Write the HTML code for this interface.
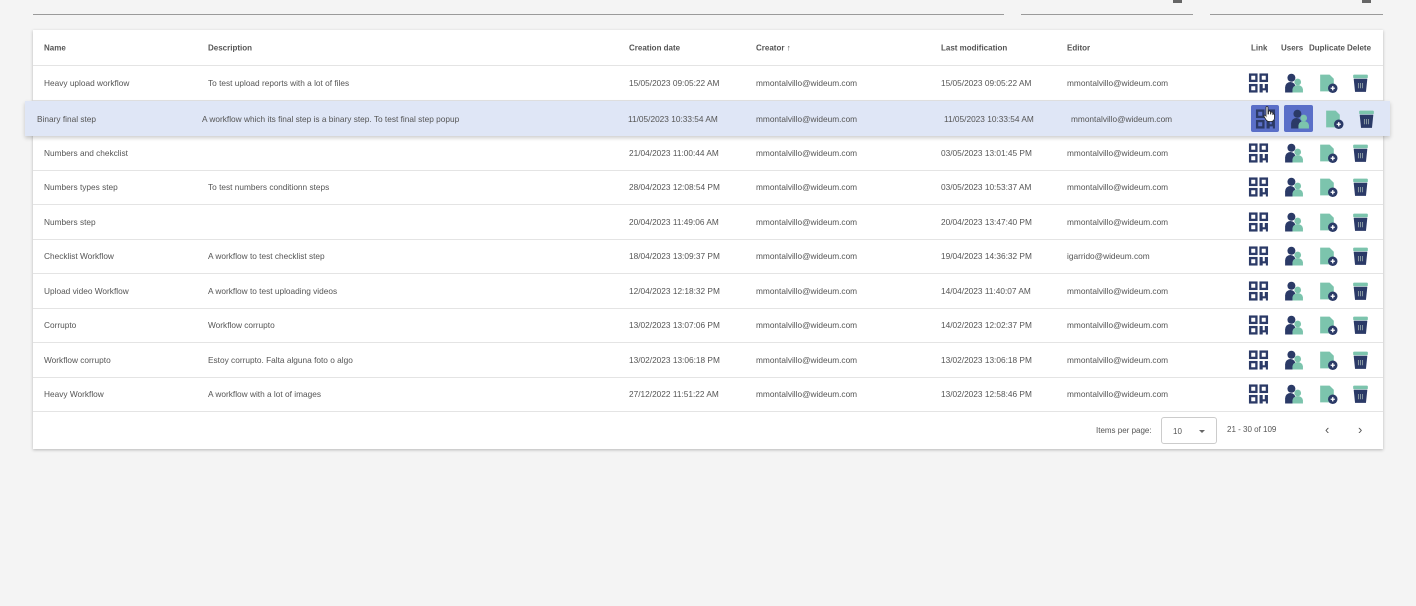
<!DOCTYPE html>
<html><head><meta charset="utf-8"><style>
*{margin:0;padding:0;box-sizing:border-box}
body{width:1416px;height:606px;background:#f4f4f4;font-family:"Liberation Sans",Arial,sans-serif;position:relative;overflow:hidden;color:#555}
.ln{position:absolute;top:14px;height:1px;background:#9a9a9a}
.mk{position:absolute;top:0;width:9px;height:3px;background:#666}
.card{position:absolute;left:33px;top:30px;width:1350px;height:419px;background:#fff;box-shadow:0 1px 3px rgba(0,0,0,.25)}
.r{position:absolute;left:0;width:1350px;height:35px;border-bottom:1px solid #e4e4e4;font-size:8.3px}
.r span{position:absolute;top:50%;transform:translateY(-50%);white-space:nowrap}
.h{font-weight:bold;color:#555;font-size:8px}
.hl{position:absolute;left:25px;top:101px;width:1365px;height:35px;background:#dfe6f6;box-shadow:0 2px 4px rgba(0,0,0,.2);font-size:8.3px;z-index:2}
.hl span{position:absolute;top:50%;transform:translateY(-50%);white-space:nowrap}
svg.i{position:absolute;top:50%;transform:translateY(-50%);width:21px;height:21px}
</style></head><body>
<svg width="0" height="0" style="position:absolute"><defs>
<symbol id="lk" viewBox="0 0 20 20"><g fill="none" stroke="#2b3a67" stroke-width="2.2"><rect x="2" y="2" width="6" height="6"/><rect x="12" y="2" width="6" height="6"/><rect x="2" y="12" width="6" height="6"/></g><path d="M11 11h3v4h2v-4h3v8h-2v-2h-3v2h-3z" fill="#2b3a67"/></symbol>
<symbol id="us" viewBox="0 0 20 20"><circle cx="8" cy="5" r="3.8" fill="#2b3a67"/><path d="M2 19v-5a5 5 0 0 1 10 0v5z" fill="#2b3a67"/><circle cx="14" cy="9" r="3.2" fill="#7cc4ad"/><path d="M9 19v-3a5 4 0 0 1 10 0v3z" fill="#7cc4ad"/></symbol>
<symbol id="du" viewBox="0 0 20 20"><path d="M3 2h9l4 4v12H3z" fill="#7cc4ad"/><circle cx="15" cy="15" r="4.5" fill="#2b3a67"/><path d="M13 15h4M15 13v4" stroke="#fff" stroke-width="1.3"/></symbol>
<symbol id="de" viewBox="0 0 20 20"><rect x="3" y="2" width="14" height="3.5" rx="1" fill="#7cc4ad"/><path d="M3.5 6h13l-1.3 12.5H4.8z" fill="#2b3a67"/><path d="M8 10v5M10 10v5M12 10v5" stroke="#9aa" stroke-width="0.8"/></symbol>
</defs></svg>
<div class="ln" style="left:33px;width:971px"></div>
<div class="ln" style="left:1021px;width:172px"></div>
<div class="ln" style="left:1210px;width:173px"></div>
<div class="mk" style="left:1173px"></div><div class="mk" style="left:1362px"></div>
<div class="card">
<div class="r h" style="top:0;height:36px"><span style="left:11px">Name</span><span style="left:175px">Description</span><span style="left:596px">Creation date</span><span style="left:723px">Creator ↑</span><span style="left:908px">Last modification</span><span style="left:1034px">Editor</span><span style="left:1218px">Link</span><span style="left:1248px">Users</span><span style="left:1276px">Duplicate</span><span style="left:1314px">Delete</span></div>
</div>
<div style="position:absolute;left:33px;top:30px;width:1350px">
<div class="r" style="top:36px"><span style="left:11px">Heavy upload workflow</span><span style="left:175px">To test upload reports with a lot of files</span><span style="left:596px">15/05/2023 09:05:22 AM</span><span style="left:723px">mmontalvillo@wideum.com</span><span style="left:908px">15/05/2023 09:05:22 AM</span><span style="left:1034px">mmontalvillo@wideum.com</span><svg class="i" style="left:1215px"><use href="#lk"/></svg><svg class="i" style="left:1250px"><use href="#us"/></svg><svg class="i" style="left:1284px"><use href="#du"/></svg><svg class="i" style="left:1317px"><use href="#de"/></svg></div>
<div class="r" style="top:71px"></div>
<div class="r" style="top:106px"><span style="left:11px">Numbers and chekclist</span><span style="left:596px">21/04/2023 11:00:44 AM</span><span style="left:723px">mmontalvillo@wideum.com</span><span style="left:908px">03/05/2023 13:01:45 PM</span><span style="left:1034px">mmontalvillo@wideum.com</span><svg class="i" style="left:1215px"><use href="#lk"/></svg><svg class="i" style="left:1250px"><use href="#us"/></svg><svg class="i" style="left:1284px"><use href="#du"/></svg><svg class="i" style="left:1317px"><use href="#de"/></svg></div>
<div class="r" style="top:140px"><span style="left:11px">Numbers types step</span><span style="left:175px">To test numbers conditionn steps</span><span style="left:596px">28/04/2023 12:08:54 PM</span><span style="left:723px">mmontalvillo@wideum.com</span><span style="left:908px">03/05/2023 10:53:37 AM</span><span style="left:1034px">mmontalvillo@wideum.com</span><svg class="i" style="left:1215px"><use href="#lk"/></svg><svg class="i" style="left:1250px"><use href="#us"/></svg><svg class="i" style="left:1284px"><use href="#du"/></svg><svg class="i" style="left:1317px"><use href="#de"/></svg></div>
<div class="r" style="top:175px"><span style="left:11px">Numbers step</span><span style="left:596px">20/04/2023 11:49:06 AM</span><span style="left:723px">mmontalvillo@wideum.com</span><span style="left:908px">20/04/2023 13:47:40 PM</span><span style="left:1034px">mmontalvillo@wideum.com</span><svg class="i" style="left:1215px"><use href="#lk"/></svg><svg class="i" style="left:1250px"><use href="#us"/></svg><svg class="i" style="left:1284px"><use href="#du"/></svg><svg class="i" style="left:1317px"><use href="#de"/></svg></div>
<div class="r" style="top:209px"><span style="left:11px">Checklist Workflow</span><span style="left:175px">A workflow to test checklist step</span><span style="left:596px">18/04/2023 13:09:37 PM</span><span style="left:723px">mmontalvillo@wideum.com</span><span style="left:908px">19/04/2023 14:36:32 PM</span><span style="left:1034px">igarrido@wideum.com</span><svg class="i" style="left:1215px"><use href="#lk"/></svg><svg class="i" style="left:1250px"><use href="#us"/></svg><svg class="i" style="left:1284px"><use href="#du"/></svg><svg class="i" style="left:1317px"><use href="#de"/></svg></div>
<div class="r" style="top:244px"><span style="left:11px">Upload video Workflow</span><span style="left:175px">A workflow to test uploading videos</span><span style="left:596px">12/04/2023 12:18:32 PM</span><span style="left:723px">mmontalvillo@wideum.com</span><span style="left:908px">14/04/2023 11:40:07 AM</span><span style="left:1034px">mmontalvillo@wideum.com</span><svg class="i" style="left:1215px"><use href="#lk"/></svg><svg class="i" style="left:1250px"><use href="#us"/></svg><svg class="i" style="left:1284px"><use href="#du"/></svg><svg class="i" style="left:1317px"><use href="#de"/></svg></div>
<div class="r" style="top:278px"><span style="left:11px">Corrupto</span><span style="left:175px">Workflow corrupto</span><span style="left:596px">13/02/2023 13:07:06 PM</span><span style="left:723px">mmontalvillo@wideum.com</span><span style="left:908px">14/02/2023 12:02:37 PM</span><span style="left:1034px">mmontalvillo@wideum.com</span><svg class="i" style="left:1215px"><use href="#lk"/></svg><svg class="i" style="left:1250px"><use href="#us"/></svg><svg class="i" style="left:1284px"><use href="#du"/></svg><svg class="i" style="left:1317px"><use href="#de"/></svg></div>
<div class="r" style="top:313px"><span style="left:11px">Workflow corrupto</span><span style="left:175px">Estoy corrupto. Falta alguna foto o algo</span><span style="left:596px">13/02/2023 13:06:18 PM</span><span style="left:723px">mmontalvillo@wideum.com</span><span style="left:908px">13/02/2023 13:06:18 PM</span><span style="left:1034px">mmontalvillo@wideum.com</span><svg class="i" style="left:1215px"><use href="#lk"/></svg><svg class="i" style="left:1250px"><use href="#us"/></svg><svg class="i" style="left:1284px"><use href="#du"/></svg><svg class="i" style="left:1317px"><use href="#de"/></svg></div>
<div class="r" style="top:347px"><span style="left:11px">Heavy Workflow</span><span style="left:175px">A workflow with a lot of images</span><span style="left:596px">27/12/2022 11:51:22 AM</span><span style="left:723px">mmontalvillo@wideum.com</span><span style="left:908px">13/02/2023 12:58:46 PM</span><span style="left:1034px">mmontalvillo@wideum.com</span><svg class="i" style="left:1215px"><use href="#lk"/></svg><svg class="i" style="left:1250px"><use href="#us"/></svg><svg class="i" style="left:1284px"><use href="#du"/></svg><svg class="i" style="left:1317px"><use href="#de"/></svg></div>
<div style="position:absolute;top:381px;left:0;width:1350px;height:38px;font-size:8px">
<span style="position:absolute;left:1063px;top:15px">Items per page:</span>
<div style="position:absolute;left:1128px;top:6px;width:56px;height:27px;border:1px solid #ccc;border-radius:3px"><span style="position:absolute;left:11px;top:9px">10</span><span style="position:absolute;left:37px;top:12px;border-left:3.5px solid transparent;border-right:3.5px solid transparent;border-top:3.5px solid #666"></span></div>
<span style="position:absolute;left:1194px;top:14px">21 - 30 of 109</span>
<span style="position:absolute;left:1292px;top:11px;font-size:13px;color:#555">‹</span>
<span style="position:absolute;left:1325px;top:11px;font-size:13px;color:#555">›</span>
</div>
</div>
<div class="hl"><span style="left:12px">Binary final step</span><span style="left:177px">A workflow which its final step is a binary step. To test final step popup</span><span style="left:603px">11/05/2023 10:33:54 AM</span><span style="left:731px">mmontalvillo@wideum.com</span><span style="left:919px">11/05/2023 10:33:54 AM</span><span style="left:1046px">mmontalvillo@wideum.com</span>
<div style="position:absolute;left:1226px;top:4px;width:28px;height:27px;background:#5a6fc8;border-radius:2px"></div>
<div style="position:absolute;left:1259px;top:4px;width:29px;height:27px;background:#5a6fc8;border-radius:2px"></div>
<svg class="i" style="left:1230px"><use href="#lk"/></svg><svg class="i" style="left:1264px"><use href="#us"/></svg><svg class="i" style="left:1298px"><use href="#du"/></svg><svg class="i" style="left:1331px"><use href="#de"/></svg>
<svg style="position:absolute;left:1238px;top:5px;width:12px;height:16px" viewBox="0 0 12 16"><path d="M3 1.5a1 1 0 0 1 2 0V8h.5V6a1 1 0 0 1 2 0v2h.3V7a1 1 0 0 1 2 0v1.3a1 1 0 0 1 1.7.7V12c0 2-1.5 3.5-3.5 3.5H6c-1.5 0-2.5-1-3.2-2L1 10.5a1 1 0 0 1 1.7-1L3 10z" fill="#fff" stroke="#222" stroke-width="0.8"/></svg>
</div>
</body></html>
